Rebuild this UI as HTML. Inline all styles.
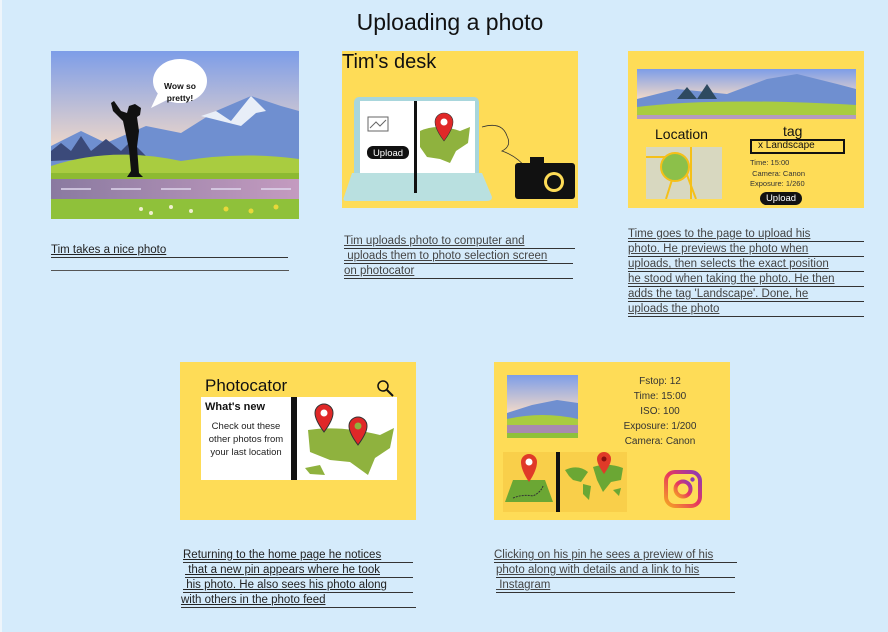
<!DOCTYPE html>
<html><head><meta charset="utf-8"><style>
*{margin:0;padding:0;box-sizing:border-box}
body{width:888px;height:632px;background:#d5ebfb;font-family:"Liberation Sans",sans-serif;position:relative;overflow:hidden;color:#111}
.a{position:absolute}
.y{background:#fedc57}
.ln{position:absolute;font-size:11.5px;line-height:15px;height:15px;border-bottom:1px solid #333;white-space:nowrap;text-decoration:underline;color:#222}
.g{color:#444}
</style></head><body>
<div class="a" style="left:0;top:0;width:2px;height:632px;background:#eef5fb"></div>
<div class="a" style="left:0;top:9px;width:900px;text-align:center;font-size:23px;color:#111;font-weight:400">Uploading a photo</div>

<svg class="a" style="left:0;top:0" width="0" height="0"><defs>
<linearGradient id="sky" x1="0" y1="0" x2="0" y2="1"><stop offset="0" stop-color="#7d9de8"/><stop offset="0.6" stop-color="#f2d9c8"/></linearGradient>
<linearGradient id="road" x1="0" x2="1"><stop offset="0" stop-color="#8a7aa0"/><stop offset="1" stop-color="#c49bc0"/></linearGradient>
</defs></svg>

<!-- panel 1 -->
<svg class="a" style="left:51px;top:51px" width="248" height="168" viewBox="0 0 248 168">
<rect width="248" height="168" fill="url(#sky)"/>
<path d="M0 95 L30 80 L55 92 L95 75 L130 82 L165 60 L200 45 L230 55 L248 60 L248 125 L0 125Z" fill="#6f8fd0"/>
<path d="M150 65 L165 60 L180 70 L200 45 L215 60 L205 62 L190 75Z" fill="#e8eef8"/>
<path d="M0 100 L10 92 L20 100 L30 85 L40 100 L55 88 L70 100 L80 90 L95 105 L0 110Z" fill="#3b4a7a"/>
<path d="M0 115 Q60 95 130 110 Q190 100 248 108 L248 130 L0 130Z" fill="#a9cc40"/>
<rect y="122" width="248" height="6" fill="#8dba32"/>
<rect y="128" width="248" height="20" fill="url(#road)"/>
<path d="M10 138 H40 M60 138 H90 M110 138 H140 M160 138 H190 M210 138 H240" stroke="#e0d8ee" stroke-width="1.5"/>
<rect y="148" width="248" height="20" fill="#8fc13a"/>
<g fill="#f0f0d0"><circle cx="90" cy="158" r="2"/><circle cx="100" cy="162" r="2"/><circle cx="120" cy="156" r="2"/><circle cx="140" cy="160" r="2"/></g>
<g fill="#e8d83a"><circle cx="175" cy="158" r="2.5"/><circle cx="200" cy="160" r="2.5"/><circle cx="225" cy="156" r="2.5"/></g>
<path d="M60 52 L63 50 L70 60 L76 62 L78 55 L84 53 L90 57 L89 64 L86 66 L88 80 L86 96 L88 122 L92 126 L76 126 L80 120 L78 98 L75 84 L72 70 L62 60Z" fill="#111"/>
<ellipse cx="129" cy="30" rx="27" ry="22" fill="#fff"/>
<path d="M108 40 L100 57 L118 48Z" fill="#fff"/>
<text x="129" y="38" font-size="8.5" font-weight="bold" text-anchor="middle" fill="#111" font-family="Liberation Sans">Wow so</text>
<text x="129" y="50" font-size="8.5" font-weight="bold" text-anchor="middle" fill="#111" font-family="Liberation Sans">pretty!</text>
</svg>
<div class="ln" style="left:51px;top:243px;width:237px">Tim takes a nice photo</div>
<div class="a" style="left:51px;top:270px;width:238px;height:1px;background:#555"></div>

<!-- panel 2 -->
<div class="a y" style="left:342px;top:51px;width:236px;height:157px"></div>
<div class="a" style="left:342px;top:51px;font-size:20px">Tim's desk</div>
<svg class="a" style="left:342px;top:51px" width="236" height="157" viewBox="0 0 236 157">
<rect x="12" y="46" width="125" height="100" rx="5" fill="#a8d6dc"/>
<rect x="18" y="50" width="115" height="92" fill="#fff"/>
<path d="M10 122 H140 L150 146 Q150 150 145 150 H5 Q0 150 2 146Z" fill="#b9e0e0"/>
<rect x="72" y="50" width="3" height="92" fill="#111"/>
<rect x="26" y="66" width="20" height="14" fill="#fff" stroke="#666"/>
<path d="M28 77 L34 71 L38 75 L44 69" stroke="#666" fill="none"/>
<rect x="25" y="95" width="42" height="13" rx="6" fill="#111"/>
<text x="46" y="105" font-size="9.5" fill="#fff" text-anchor="middle" font-family="Liberation Sans">Upload</text>
<path d="M78 80 Q95 72 118 80 L128 76 L126 92 L114 100 L108 112 L98 108 L85 106 L78 96Z" fill="#8fb23e"/>
<path d="M102 62 a9 9 0 0 1 9 9 Q111 78 102 90 Q93 78 93 71 a9 9 0 0 1 9 -9Z" fill="#e02828" stroke="#333" stroke-width="0.6"/>
<circle cx="102" cy="71" r="3.5" fill="#fff"/>
<path d="M140 76 Q160 70 165 85 Q170 95 160 100 Q175 105 185 118" stroke="#333" fill="none" stroke-width="0.8"/>
<rect x="173" y="112" width="60" height="36" rx="3" fill="#111"/>
<rect x="188" y="106" width="14" height="7" fill="#111"/>
<circle cx="212" cy="131" r="10" fill="#fedc57"/><circle cx="212" cy="131" r="7" fill="#111"/>
</svg>
<div class="ln g" style="left:344px;top:234px;width:231px">Tim uploads photo to computer and</div>
<div class="ln g" style="left:344px;top:249px;width:229px">&nbsp;uploads them to photo selection screen</div>
<div class="ln g" style="left:344px;top:264px;width:229px">on photocator</div>

<!-- panel 3 -->
<div class="a y" style="left:628px;top:51px;width:236px;height:157px"></div>
<svg class="a" style="left:637px;top:69px" width="219" height="50" viewBox="0 0 219 50">
<rect width="219" height="50" fill="url(#sky)"/>
<path d="M0 30 L40 20 L90 25 L130 10 L160 5 L200 15 L219 20 L219 40 L0 40Z" fill="#6f8fd0"/>
<path d="M40 30 L50 18 L60 30 L70 15 L80 30Z" fill="#2e4a60"/>
<path d="M0 38 Q80 28 219 36 L219 46 L0 46Z" fill="#a9cc40"/>
<rect y="46" width="219" height="4" fill="#b59bc0"/>
</svg>
<div class="a" style="left:655px;top:126px;font-size:14px">Location</div>
<div class="a" style="left:783px;top:123px;font-size:14px">tag</div>
<div class="a" style="left:750px;top:139px;width:95px;height:15px;border:2.5px solid #111;font-size:10px;line-height:10px;padding-left:6px">x Landscape</div>
<svg class="a" style="left:646px;top:147px" width="76" height="52"><rect width="76" height="52" fill="#d8d8c0"/><path d="M0 10 H20 M45 0 V52 M30 20 L20 52 M38 20 L50 52" stroke="#f5c018" stroke-width="2"/><circle cx="29" cy="20" r="14" fill="#8cc04a" stroke="#f5c018" stroke-width="2"/></svg>
<div class="a" style="left:750px;top:158px;font-size:7.5px;line-height:10.5px;color:#333">Time: 15:00<br>&nbsp;Camera: Canon<br>Exposure: 1/260</div>
<div class="a" style="left:760px;top:192px;width:42px;height:13px;border-radius:7px;background:#111;color:#fff;font-size:9.5px;text-align:center;line-height:13px">Upload</div>
<div class="ln g" style="left:628px;top:227px;width:236px">Time goes to the page to upload his</div>
<div class="ln g" style="left:628px;top:242px;width:236px">photo. He previews the photo when</div>
<div class="ln g" style="left:628px;top:257px;width:236px">uploads, then selects the exact position</div>
<div class="ln g" style="left:628px;top:272px;width:236px">he stood when taking the photo. He then</div>
<div class="ln g" style="left:628px;top:287px;width:236px">adds the tag 'Landscape'. Done, he</div>
<div class="ln g" style="left:628px;top:302px;width:236px">uploads the photo</div>

<!-- panel 4 -->
<div class="a y" style="left:180px;top:362px;width:236px;height:158px"></div>
<div class="a" style="left:205px;top:376px;font-size:17px">Photocator</div>
<svg class="a" style="left:376px;top:379px" width="20" height="20"><circle cx="7" cy="7" r="5" fill="none" stroke="#111" stroke-width="1.5"/><path d="M11 11 L17 17" stroke="#111" stroke-width="2"/></svg>
<div class="a" style="left:201px;top:397px;width:196px;height:83px;background:#fff"></div>
<div class="a" style="left:291px;top:397px;width:6px;height:83px;background:#111"></div>
<div class="a" style="left:205px;top:401px;font-size:11px;font-weight:bold">What's new</div>
<div class="a" style="left:201px;top:420px;width:90px;font-size:9.5px;line-height:13px;text-align:center;color:#222">Check out these other photos from your last location</div>
<svg class="a" style="left:300px;top:400px" width="96" height="78"><path d="M8 30 Q40 25 80 35 L94 28 L90 48 L75 58 L68 75 L50 62 L30 60 L10 52Z" fill="#8fb23e"/><path d="M5 68 L20 65 L25 75 L10 74Z" fill="#8fb23e"/>
<path d="M24 4 a9 9 0 0 1 9 9 Q33 20 24 32 Q15 20 15 13 a9 9 0 0 1 9 -9Z" fill="#e02828" stroke="#333"/><circle cx="24" cy="13" r="3.5" fill="#fff"/>
<path d="M58 17 a9 9 0 0 1 9 9 Q67 33 58 45 Q49 33 49 26 a9 9 0 0 1 9 -9Z" fill="#e02828" stroke="#333"/><circle cx="58" cy="26" r="3.5" fill="#8fb23e"/></svg>
<div class="ln" style="left:183px;top:548px;width:230px">Returning to the home page he notices</div>
<div class="ln" style="left:185px;top:563px;width:228px">&nbsp;that a new pin appears where he took</div>
<div class="ln" style="left:183px;top:578px;width:230px">&nbsp;his photo. He also sees his photo along</div>
<div class="ln" style="left:181px;top:593px;width:235px">with others in the photo feed</div>

<!-- panel 5 -->
<div class="a y" style="left:494px;top:362px;width:236px;height:158px"></div>
<svg class="a" style="left:507px;top:375px" width="71" height="63" viewBox="0 0 71 63"><rect width="71" height="63" fill="url(#sky)"/><path d="M0 38 L25 30 L50 25 L71 28 L71 48 L0 48Z" fill="#6f8fd0"/><path d="M0 44 Q35 36 71 44 L71 50 L0 50Z" fill="#a9cc40"/><rect y="50" width="71" height="8" fill="#a88bb0"/><rect y="58" width="71" height="5" fill="#8fc13a"/></svg>
<div class="a" style="left:600px;top:374px;width:120px;text-align:center;font-size:10px;line-height:15px;color:#333">Fstop: 12<br>Time: 15:00<br>ISO: 100<br>Exposure: 1/200<br>Camera: Canon</div>
<div class="a" style="left:503px;top:452px;width:124px;height:60px;background:#f9cf4a"></div>
<svg class="a" style="left:503px;top:452px" width="124" height="60"><path d="M2 50 L10 28 L42 28 L50 50Z" fill="#6ba734"/><path d="M10 46 Q20 42 30 44 Q38 40 40 34" stroke="#333" stroke-dasharray="2 1" fill="none"/><path d="M26 2 a8 8 0 0 1 8 8 Q34 18 26 30 Q18 18 18 10 a8 8 0 0 1 8 -8Z" fill="#e03a28"/><circle cx="26" cy="10" r="3.5" fill="#fff"/><rect x="53" y="0" width="4" height="60" fill="#111"/><path d="M62 18 Q75 12 85 20 L78 30 L70 28 L66 24Z M80 32 L88 34 L86 48 L80 42Z M90 15 Q105 10 120 16 L118 28 L108 30 L100 40 L94 28Z M110 38 L118 36 L116 44Z" fill="#6ba734"/><path d="M101 0 a7 7 0 0 1 7 7 Q108 12 101 22 Q94 12 94 7 a7 7 0 0 1 7 -7Z" fill="#e03a28"/><circle cx="101" cy="7" r="2.5" fill="#8a1010"/></svg>
<svg class="a" style="left:664px;top:470px" width="38" height="38"><defs><linearGradient id="ig" x1="0" y1="1" x2="1" y2="0"><stop offset="0" stop-color="#f5a623"/><stop offset="0.5" stop-color="#e8365d"/><stop offset="1" stop-color="#8a3ab9"/></linearGradient></defs><rect x="2" y="2" width="34" height="34" rx="9" fill="none" stroke="url(#ig)" stroke-width="4"/><circle cx="19" cy="19" r="7.5" fill="none" stroke="url(#ig)" stroke-width="4"/><circle cx="28.5" cy="9.5" r="2.2" fill="#8a3ab9"/></svg>
<div class="ln g" style="left:494px;top:548px;width:243px">Clicking on his pin he sees a preview of his</div>
<div class="ln g" style="left:496px;top:563px;width:239px">photo along with details and a link to his</div>
<div class="ln g" style="left:496px;top:578px;width:239px">&nbsp;Instagram</div>
</body></html>
